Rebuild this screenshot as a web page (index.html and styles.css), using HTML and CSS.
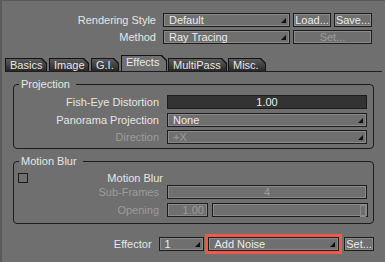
FILE: index.html
```html
<!DOCTYPE html>
<html>
<head>
<meta charset="utf-8">
<link rel="stylesheet" href="styles.css">
</head>
<body>
<div class="app">
  <div class="top">
    <div class="row">
      <span class="label">Rendering Style</span>
      <div class="field drop w-style">Default<i class="arrow"></i></div>
      <div class="btn w-btn">Load...</div>
      <div class="btn w-btn">Save...</div>
    </div>
    <div class="row">
      <span class="label">Method</span>
      <div class="field drop w-style">Ray Tracing<i class="arrow"></i></div>
      <div class="btn w-set disabled">Set...</div>
    </div>
  </div>

  <div class="tabs">
    <div class="tab t-basics"><span>Basics</span></div>
    <div class="tab t-image"><span>Image</span></div>
    <div class="tab t-gi"><span>G.I.</span></div>
    <div class="tab t-effects active"><span>Effects</span></div>
    <div class="tab t-multi"><span>MultiPass</span></div>
    <div class="tab t-misc"><span>Misc.</span></div>
  </div>

  <div class="panel">
    <fieldset class="group g-proj">
      <legend>Projection</legend>
      <div class="grow">
        <span class="glabel">Fish-Eye Distortion</span>
        <div class="field num">1.00</div>
      </div>
      <div class="grow gap4">
        <span class="glabel">Panorama Projection</span>
        <div class="field drop wide">None<i class="arrow"></i></div>
      </div>
      <div class="grow gap3">
        <span class="glabel disabled-text">Direction</span>
        <div class="field drop wide disabled">+X<i class="arrow"></i></div>
      </div>
    </fieldset>

    <fieldset class="group g-blur">
      <legend>Motion Blur</legend>
      <div class="grow check-row">
        <span class="check"></span>
        <span class="glabel check-label">Motion Blur</span>
      </div>
      <div class="grow gap2">
        <span class="glabel disabled-text">Sub-Frames</span>
        <div class="field center wide disabled">4</div>
      </div>
      <div class="grow gap4">
        <span class="glabel disabled-text">Opening</span>
        <div class="field right small disabled">1.00</div>
        <div class="slider disabled"><i class="thumb"></i></div>
      </div>
    </fieldset>

    <div class="row effector">
      <span class="label">Effector</span>
      <div class="field drop w-eff">1<i class="arrow"></i></div>
      <div class="field drop w-noise highlight">Add Noise<i class="arrow"></i></div>
      <div class="btn w-set2">Set...</div>
    </div>
  </div>
</div>
</body>
</html>
```

FILE: styles.css
```css
html, body {
  margin: 0;
  padding: 0;
}
body {
  width: 385px;
  height: 262px;
  overflow: hidden;
  background: #6f6f6f;
  font-family: "Liberation Sans", "DejaVu Sans", sans-serif;
  font-size: 11px;
  color: #e6e6e6;
}
.app {
  height: 262px;
  box-sizing: border-box;
  border-left: 2px solid #5a5a5a;
  border-top: 1px solid #5a5a5a;
  padding-top: 12px;
}
.top {
  display: flex;
  flex-direction: column;
  gap: 3px;
}
.row {
  display: flex;
  align-items: center;
  height: 14px;
}
.label {
  width: 154px;
  text-align: right;
  margin-right: 7px;
  white-space: nowrap;
}
.field {
  position: relative;
  box-sizing: border-box;
  height: 14px;
  line-height: 12px;
  border: 1px solid #1c1c1c;
  box-shadow: inset 0 0 0 1px #8a8a8a;
  padding: 0 5px;
  white-space: nowrap;
  color: #ececec;
}
.drop .arrow {
  position: absolute;
  right: 3px;
  bottom: 3px;
  width: 0;
  height: 0;
  border-left: 5px solid transparent;
  border-bottom: 5px solid #111;
}
.w-style { width: 127px; }
.btn {
  box-sizing: border-box;
  height: 14px;
  line-height: 12px;
  border: 1px solid #1c1c1c;
  box-shadow: inset 0 0 0 1px #8a8a8a;
  text-align: center;
  color: #ececec;
  margin-left: 3px;
}
.w-btn { width: 38px; }
.w-set { width: 79px; }
.disabled { color: #9c9c9c; }
.disabled-text { color: #9c9c9c; }

.tabs {
  display: flex;
  align-items: flex-end;
  gap: 2px;
  margin-top: 11px;
  margin-left: 3px;
  margin-right: 3px;
  height: 16px;
  border-bottom: 1px solid #1e1e1e;
}
.tab {
  box-sizing: border-box;
  height: 13px;
  background: #141414;
  padding: 1px 1px 0 1px;
  clip-path: polygon(0 0, calc(100% - 5px) 0, 100% 5px, 100% 100%, 0 100%);
}
.tab span {
  display: block;
  height: 12px;
  line-height: 12px;
  padding-left: 4px;
  background: linear-gradient(#5c5c5c, #282828);
  clip-path: polygon(0 0, calc(100% - 5px) 0, 100% 5px, 100% 100%, 0 100%);
  color: #e8e8e8;
}
.tab.active {
  height: 16px;
}
.tab.active span {
  height: 15px;
  line-height: 13px;
  background: #6f6f6f;
  padding-left: 4px;
}
.t-basics { width: 42px; }
.t-image { width: 40px; }
.t-gi { width: 28px; }
.t-effects { width: 46px; }
.t-multi { width: 59px; margin-left: -1px; }
.t-misc { width: 38px; margin-left: -1px; }

.panel {
  padding: 6px 11px 0 11px;
}
.group {
  margin: 0;
  border: 1px solid #1c1c1c;
  border-radius: 4px;
  min-width: 0;
  box-sizing: border-box;
  display: flex;
  flex-direction: column;
}
.group legend {
  padding: 0 6px 0 2px;
  margin-left: 5px;
  height: 12px;
  line-height: 12px;
}
.g-proj {
  height: 71px;
  padding: 5px 0 0 0;
}
.g-blur {
  height: 69px;
  margin-top: 6px;
  padding: 6px 0 0 0;
}
.grow {
  display: flex;
  align-items: center;
  height: 14px;
  flex: none;
}
.gap2 { margin-top: 2px; }
.gap3 { margin-top: 3px; }
.gap4 { margin-top: 4px; }
.glabel {
  width: 145px;
  margin-right: 8px;
  text-align: right;
  white-space: nowrap;
}
.num {
  width: 200px;
  background: #333333;
  box-shadow: none;
  text-align: center;
}
.wide { width: 200px; }
.center { text-align: center; }
.right { text-align: right; }
.small { width: 41px; padding: 0 3px; }
.slider {
  position: relative;
  box-sizing: border-box;
  width: 156px;
  height: 14px;
  margin-left: 4px;
  border: 1px solid #1c1c1c;
  box-shadow: inset 0 0 0 1px #8a8a8a;
}
.slider .thumb {
  position: absolute;
  right: 1px;
  top: 1px;
  width: 4px;
  height: 10px;
  border: 1px solid #8a8a8a;
}
.check-row {
  height: 10px;
}
.check {
  box-sizing: border-box;
  width: 10px;
  height: 10px;
  border: 1px solid #1c1c1c;
  margin-left: 4px;
}
.check-label {
  width: 135px;
  margin-right: 0;
}
.effector {
  margin-top: 13px;
}
.effector .label {
  width: 139px;
}
.w-eff { width: 46px; }
.w-noise {
  width: 131px;
  margin-left: 4px;
  outline: 3px solid #f0584a;
}
.w-set2 {
  width: 30px;
  margin-left: 5px;
}
```
